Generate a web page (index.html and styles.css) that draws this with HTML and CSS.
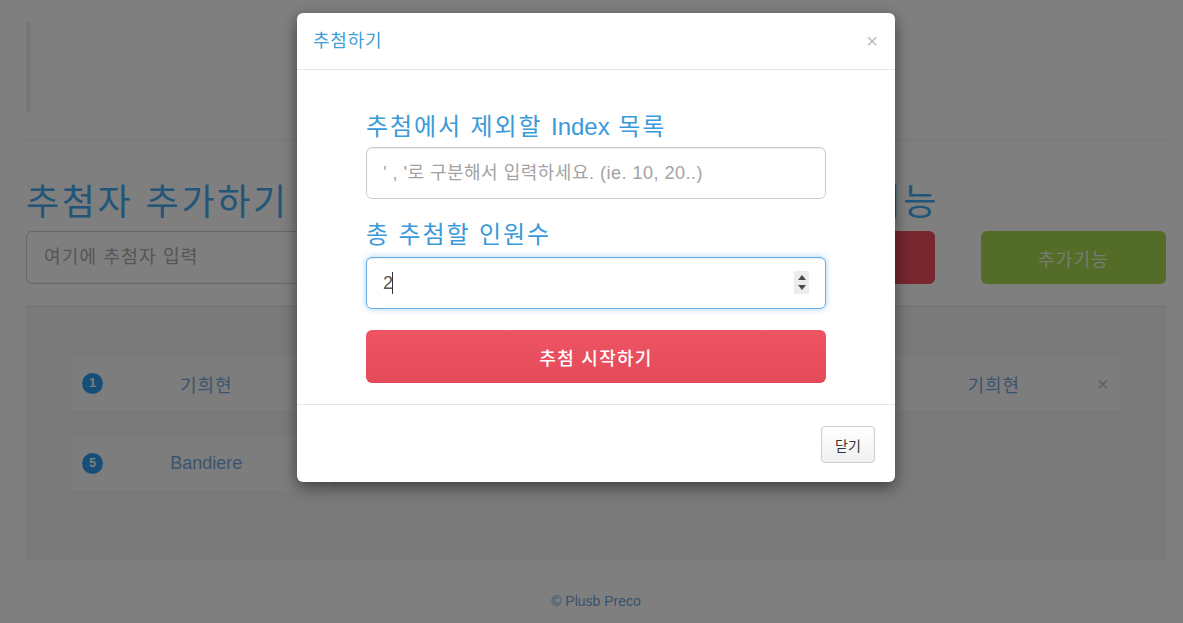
FILE: index.html
```html
<!DOCTYPE html>
<html lang="ko">
<head>
<meta charset="utf-8">
<title>추첨하기</title>
<link rel="stylesheet" href="styles.css">
</head>
<body>
<div class="page">
  <blockquote class="quote"></blockquote>
  <hr class="divider">
  <div class="entry-row">
    <div class="col col-entry">
      <h1 class="title">추첨자 추가하기</h1>
      <input class="field" type="text" placeholder="여기에 추첨자 입력">
    </div>
    <div class="col col-draw">
      <h1 class="title">추가기능</h1>
      <button class="btn btn-draw">추첨</button>
    </div>
    <div class="col col-extra">
      <div class="title-space"></div>
      <button class="btn btn-extra">추가기능</button>
    </div>
  </div>
  <div class="well">
    <div class="cards">
      <div class="card"><span class="badge">1</span><span class="name">기희현</span><span class="remove">×</span></div>
      <div class="card"><span class="badge">2</span><span class="name">김소혜</span><span class="remove">×</span></div>
      <div class="card"><span class="badge">3</span><span class="name">정채연</span><span class="remove">×</span></div>
      <div class="card"><span class="badge">4</span><span class="name">기희현</span><span class="remove">×</span></div>
      <div class="card"><span class="badge">5</span><span class="name name-latin">Bandiere</span><span class="remove">×</span></div>
    </div>
  </div>
  <footer class="foot">© Plusb Preco</footer>
</div>

<div class="backdrop"></div>
<div class="modal">
  <div class="dialog">
    <div class="modal-header">
      <h4 class="modal-title">추첨하기</h4>
      <span class="close">×</span>
    </div>
    <div class="modal-body">
      <label class="label">추첨에서 제외할 <span class="latin">Index</span> 목록</label>
      <input class="m-field" type="text" placeholder="' , '로 구분해서 입력하세요. (ie. 10, 20..)">
      <label class="label label-second">총 추첨할 인원수</label>
      <div class="spin-wrap">
        <input class="m-field m-focus" type="number" value="2">
        <span class="caret"></span>
        <span class="spinner"><span class="tri-up"></span><span class="tri-down"></span></span>
      </div>
      <button class="start-btn">추첨 시작하기</button>
    </div>
    <div class="modal-footer">
      <button class="close-btn">닫기</button>
    </div>
  </div>
</div>
</body>
</html>
```

FILE: styles.css
```css
* { box-sizing: border-box; }
html, body { margin: 0; padding: 0; }
body {
  position: relative;
  background: #fff;
  font-family: "Liberation Sans", "Noto Sans CJK KR", sans-serif;
  color: #333;
  font-size: 14px;
  width: 1183px;
  height: 623px;
  overflow: hidden;
}
.page { padding: 22px 17px 0 26px; }
.quote {
  margin: 0;
  height: 90px;
  border-left: 5px solid #eee;
}
.divider {
  margin: 28px 0 0;
  border: 0;
  border-top: 1px solid #eee;
  height: 0;
}
.entry-row { display: flex; align-items: flex-end; }
.col { display: flex; flex-direction: column; }
.col-entry { flex: 1; }
.col-draw { width: 139px; margin-left: 16px; }
.col-extra { width: 185px; margin-left: 46px; }
.title {
  margin: 41px 0 7px;
  font-size: 36px;
  line-height: 42px;
  font-weight: 400;
  letter-spacing: 2.6px;
  color: #44abf0;
  white-space: nowrap;
}
.title-space { height: 42px; margin: 41px 0 7px; }
.field {
  height: 53px;
  width: 100%;
  border: 1px solid #ccc;
  border-radius: 6px;
  padding: 0 17px;
  font: inherit;
  font-size: 18px;
  letter-spacing: 1.2px;
  color: #555;
  outline: none;
}
.field::placeholder { color: #aaa; }
.btn {
  height: 53px;
  border: 0;
  border-radius: 6px;
  font: inherit;
  font-size: 18px;
  letter-spacing: 1.2px;
  color: #fff;
}
.btn-draw { background: #f04e5f; }
.btn-extra { background: #a6d94e; color: #eef7e0; }

.well {
  margin-top: 21px;
  height: 255px;
  background: #f5f5f5;
  border: 1px solid #f0f0f0;
  border-radius: 4px;
  box-shadow: inset 0 1px 1px rgba(0,0,0,.05);
  padding: 49px 44px 0;
}
.cards {
  display: grid;
  grid-template-columns: repeat(4, 1fr);
  row-gap: 23px;
}
.card {
  height: 57px;
  display: flex;
  align-items: center;
  padding: 0 13px 0 10px;
  background: #fbfbfb;
  border: 1px solid #f1f1f1;
}
.badge {
  width: 21px;
  height: 21px;
  border-radius: 50%;
  background: #2c9cf2;
  color: #fff;
  font-size: 12px;
  font-weight: 700;
  line-height: 21px;
  text-align: center;
}
.name {
  flex: 1;
  text-align: center;
  font-size: 18px;
  letter-spacing: 1px;
  color: #76a9dc;
}
.name-latin { letter-spacing: 0; }
.remove {
  width: 10px;
  font-size: 20px;
  line-height: 20px;
  color: #c2c2c2;
  text-align: center;
}
.foot {
  margin-top: 31px;
  text-align: center;
  font-size: 14px;
  line-height: 20px;
  color: #6ea4dc;
}

.backdrop {
  position: absolute;
  top: 0;
  left: 0;
  width: 1183px;
  height: 623px;
  z-index: 1040;
  background-color: #000;
  opacity: 0.5;
}
.modal {
  position: absolute;
  top: 0;
  left: 0;
  width: 1183px;
  height: 623px;
  z-index: 1050;
}
.dialog {
  width: 598px;
  margin: 13px 0 0 297px;
  background: #fff;
  border-radius: 6px;
  box-shadow: 0 5px 15px rgba(0,0,0,.5);
}
.modal-header {
  display: flex;
  align-items: center;
  justify-content: space-between;
  padding: 15px 16px;
  border-bottom: 1px solid #e5e5e5;
}
.modal-title {
  margin: 0;
  font-size: 18px;
  line-height: 26px;
  font-weight: 400;
  letter-spacing: 0.8px;
  color: #3f9fd6;
}
.close {
  font-size: 20px;
  line-height: 20px;
  font-weight: 400;
  color: #bdbdbd;
  margin-right: 1px;
}
.modal-body {
  padding: 40px 69px 21px;
  display: flex;
  flex-direction: column;
}
.label {
  font-size: 24px;
  line-height: 34px;
  font-weight: 400;
  letter-spacing: 1.9px;
  color: #3a9ad9;
  margin: 0 0 3px;
  white-space: nowrap;
}
.latin { letter-spacing: 0; }
.label-second { margin-top: 19px; margin-bottom: 5px; }
.m-field {
  width: 460px;
  height: 52px;
  border: 1px solid #ccc;
  border-radius: 6px;
  padding: 0 16px;
  font: inherit;
  font-size: 18px;
  color: #555;
  outline: none;
  box-shadow: inset 0 1px 1px rgba(0,0,0,.075);
}
.m-field::placeholder { color: #a3a3a3; letter-spacing: 0.5px; }
.m-focus {
  border-color: #66afe9;
  box-shadow: inset 0 1px 1px rgba(0,0,0,.075), 0 0 6px rgba(102,175,233,.6);
  -moz-appearance: textfield;
}
.m-focus::-webkit-inner-spin-button,
.m-focus::-webkit-outer-spin-button { -webkit-appearance: none; margin: 0; }
.spin-wrap { position: relative; width: 460px; height: 52px; }
.caret {
  position: absolute;
  left: 26px;
  top: 15px;
  width: 1px;
  height: 22px;
  background: #333;
}
.spinner {
  position: absolute;
  top: 14px;
  right: 17px;
  width: 15px;
  height: 23px;
  background: #ececec;
  display: flex;
  flex-direction: column;
  align-items: center;
  justify-content: center;
  gap: 5px;
}
.tri-up, .tri-down {
  width: 0;
  height: 0;
  border-left: 4px solid transparent;
  border-right: 4px solid transparent;
}
.tri-up { border-bottom: 5px solid #4a4a4a; }
.tri-down { border-top: 5px solid #4a4a4a; }
.start-btn {
  margin-top: 21px;
  width: 460px;
  height: 53px;
  border: 0;
  border-radius: 6px;
  background: linear-gradient(#ee5464, #e44b59);
  color: #fff;
  font: inherit;
  font-size: 18px;
  font-weight: 500;
  letter-spacing: 1.3px;
}
.modal-footer {
  border-top: 1px solid #e5e5e5;
  padding: 21px 20px 19px;
  display: flex;
  justify-content: flex-end;
}
.close-btn {
  width: 54px;
  height: 37px;
  border: 1px solid #ccc;
  border-radius: 4px;
  background: linear-gradient(#fff, #f0f0f0);
  font: inherit;
  font-size: 14px;
  color: #333;
}
```
